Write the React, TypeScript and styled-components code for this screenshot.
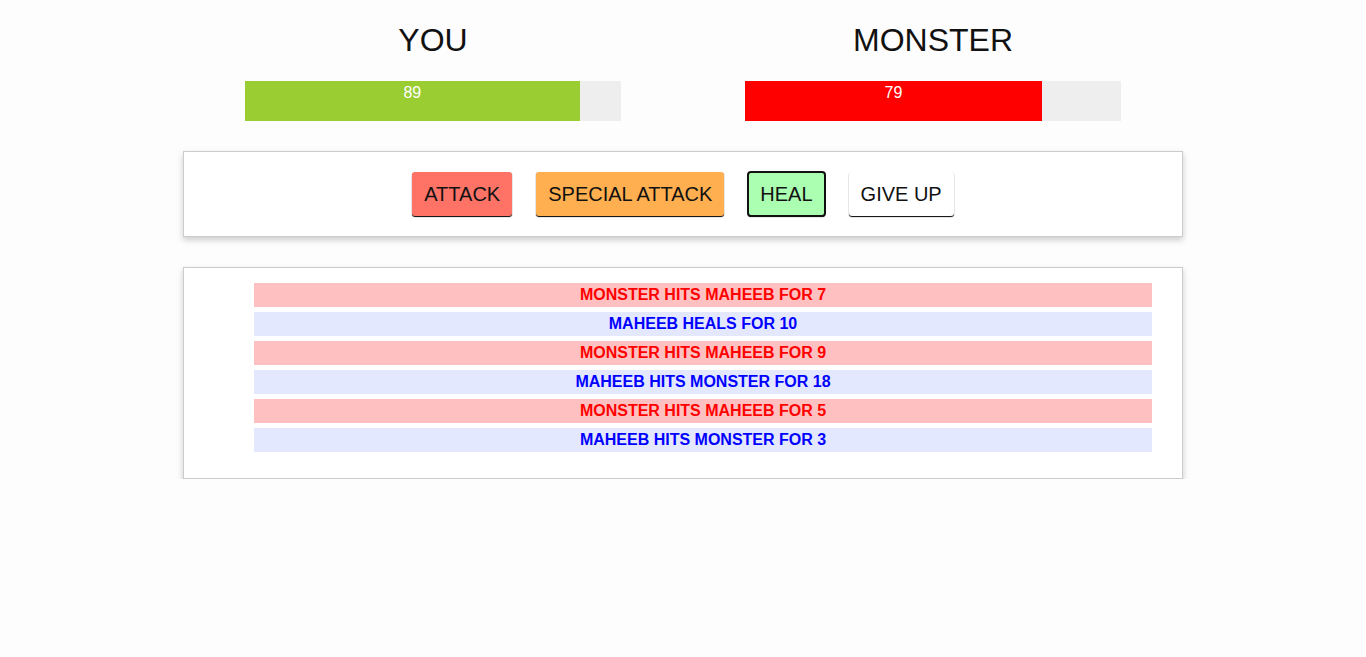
import React from "react";
import styled, { createGlobalStyle } from "styled-components";

const GlobalStyle = createGlobalStyle`
  html, body {
    margin: 0;
    padding: 0;
    background: #fdfdfd;
    font-family: "Liberation Sans", Arial, sans-serif;
    color: #111;
  }
`;

const Container = styled.div`
  width: 1000px;
  margin: 0 auto;
  padding-top: 22px;
`;

const Stats = styled.section`
  display: grid;
  grid-template-columns: 1fr 1fr;
`;

const Column = styled.div`
  padding: 0 15px;
  text-align: center;
`;

const Title = styled.h1`
  margin: 0 0 22px;
  font-size: 32px;
  font-weight: normal;
  line-height: 37px;
`;

const Track = styled.div`
  width: 80%;
  height: 40px;
  margin: 0 auto;
  background: #eee;
  display: flex;
`;

const Fill = styled.div<{ $color: string }>`
  height: 100%;
  background: ${(p) => p.$color};
  color: #fff;
  font-size: 16px;
  line-height: 22px;
  padding-top: 1px;
  text-align: center;
  box-sizing: border-box;
`;

const Panel = styled.section`
  margin-top: 30px;
  padding: 10px;
  border: 1px solid #ccc;
  background: #fff;
  box-shadow: 0 3px 6px #ccc;
`;

const Controls = styled.div`
  display: flex;
  justify-content: center;
  gap: 24px;
  padding: 10px 0;
`;

const Button = styled.button<{ $bg: string; $focused?: boolean }>`
  font-family: "Liberation Sans", Arial, sans-serif;
  font-size: 20px;
  line-height: 23px;
  color: #111;
  background: ${(p) => p.$bg};
  border: none;
  border-radius: 3px;
  padding: 10px 12px;
  height: 44px;
  box-shadow: 0 1px 1px #000;
  cursor: pointer;
  outline: ${(p) => (p.$focused ? "2px solid #111" : "none")};
  outline-offset: -1px;
`;

const LogList = styled.ul`
  list-style: none;
  margin: 0;
  padding: 5px 20px 16px 60px;
  display: flex;
  flex-direction: column;
  gap: 5px;
`;

const LogItem = styled.li<{ $player: boolean }>`
  font-size: 16px;
  font-weight: bold;
  line-height: 24px;
  text-transform: uppercase;
  text-align: center;
  color: ${(p) => (p.$player ? "#0000ff" : "#ff0000")};
  background: ${(p) => (p.$player ? "#e4e8ff" : "#ffc0c1")};
`;

const log = [
  { player: false, text: "Monster hits Maheeb for 7" },
  { player: true, text: "Maheeb heals for 10" },
  { player: false, text: "Monster hits Maheeb for 9" },
  { player: true, text: "Maheeb hits Monster for 18" },
  { player: false, text: "Monster hits Maheeb for 5" },
  { player: true, text: "Maheeb hits Monster for 3" },
];

export default function App() {
  const playerHealth = 89;
  const monsterHealth = 79;
  return (
    <>
      <GlobalStyle />
      <Container>
        <Stats>
          <Column>
            <Title>YOU</Title>
            <Track>
              <Fill $color="#9acd32" style={{ width: `${playerHealth}%` }}>
                {playerHealth}
              </Fill>
            </Track>
          </Column>
          <Column>
            <Title>MONSTER</Title>
            <Track>
              <Fill $color="#ff0000" style={{ width: `${monsterHealth}%` }}>
                {monsterHealth}
              </Fill>
            </Track>
          </Column>
        </Stats>
        <Panel>
          <Controls>
            <Button $bg="#ff7367">ATTACK</Button>
            <Button $bg="#ffaf4f">SPECIAL ATTACK</Button>
            <Button $bg="#aaffb0" $focused>
              HEAL
            </Button>
            <Button $bg="#ffffff">GIVE UP</Button>
          </Controls>
        </Panel>
        <Panel>
          <LogList>
            {log.map((l, i) => (
              <LogItem key={i} $player={l.player}>
                {l.text}
              </LogItem>
            ))}
          </LogList>
        </Panel>
      </Container>
    </>
  );
}
